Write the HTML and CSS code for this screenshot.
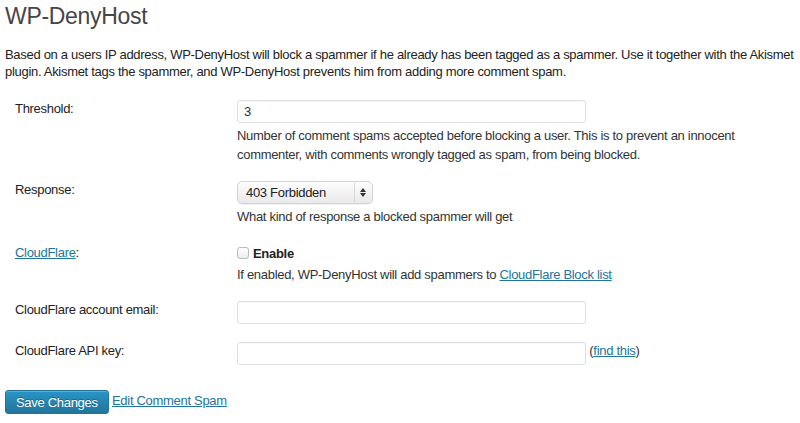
FILE: index.html
```html
<!DOCTYPE html>
<html>
<head>
<meta charset="utf-8">
<link rel="stylesheet" href="styles.css">
</head>
<body>
<div class="wrap">
  <h2 class="title">WP-DenyHost</h2>
  <p class="intro">Based on a users IP address, WP-DenyHost will block a spammer if he already has been tagged as a spammer. Use it together with the Akismet plugin. Akismet tags the spammer, and WP-DenyHost prevents him from adding more comment spam.</p>
  <form class="settings">
    <table class="form-table">
      <tr>
        <th>Threshold:</th>
        <td>
          <input class="text-field" type="text" value="3">
          <p class="description">Number of comment spams accepted before blocking a user. This is to prevent an innocent commenter, with comments wrongly tagged as spam, from being blocked.</p>
        </td>
      </tr>
      <tr>
        <th>Response:</th>
        <td>
          <span class="select-wrap"><select class="select"><option>403 Forbidden</option></select><span class="arrows"></span></span>
          <p class="description">What kind of response a blocked spammer will get</p>
        </td>
      </tr>
      <tr>
        <th class="th-check"><a href="#">CloudFlare</a>:</th>
        <td>
          <label class="check"><input type="checkbox" class="checkbox"><span>Enable</span></label>
          <p class="description">If enabled, WP-DenyHost will add spammers to <a href="#">CloudFlare Block list</a></p>
        </td>
      </tr>
      <tr>
        <th>CloudFlare account email:</th>
        <td><input class="text-field" type="text" value=""></td>
      </tr>
      <tr>
        <th>CloudFlare API key:</th>
        <td><input class="text-field" type="text" value=""> (<a href="#">find this</a>)</td>
      </tr>
    </table>
    <p class="submit"><button type="button" class="button-primary">Save Changes</button> <a href="#">Edit Comment Spam</a></p>
  </form>
</div>
</body>
</html>
```

FILE: styles.css
```css
html, body {
  margin: 0;
  padding: 0;
  background: #ffffff;
}
body {
  font-family: "Liberation Sans", Arial, sans-serif;
  font-size: 13px;
  letter-spacing: -0.3px;
  color: #333333;
}
a {
  color: #21759b;
  text-decoration: underline;
}
.wrap {
  padding: 0 5px;
}
.title {
  margin: 2px 0 0;
  font-size: 23px;
  font-weight: normal;
  line-height: 29px;
  color: #464646;
}
.intro {
  margin: 15px 0 0;
  width: 790px;
  line-height: 17px;
  color: #222222;
}
.settings {
  margin: 0;
}
.form-table {
  border-collapse: collapse;
  margin-top: 11px;
}
.form-table th {
  width: 202px;
  padding: 10px;
  text-align: left;
  vertical-align: top;
  font-weight: normal;
  line-height: 16px;
  color: #222222;
}
.form-table th.th-check {
  padding-top: 11px;
}
.form-table td {
  padding: 8px 10px;
  vertical-align: top;
  line-height: 19px;
}
.text-field {
  box-sizing: border-box;
  width: 349px;
  height: 23px;
  margin: 1px 0;
  padding: 2px 6px;
  border: 1px solid #dfdfdf;
  border-radius: 3px;
  background: #ffffff;
  font-family: "Liberation Sans", Arial, sans-serif;
  font-size: 13px;
  color: #333333;
  box-shadow: inset 0 1px 1px rgba(0,0,0,0.03);
  vertical-align: top;
}
.description {
  margin: 2px 0 0;
  line-height: 19px;
  color: #333333;
}
.select-wrap {
  position: relative;
  display: inline-block;
  margin: 1px 0;
  vertical-align: top;
}
.select {
  -webkit-appearance: none;
  appearance: none;
  box-sizing: border-box;
  width: 136px;
  height: 23px;
  padding: 0 0 0 8px;
  border: 1px solid #d4d4d4;
  border-radius: 5px;
  background: linear-gradient(#fdfdfd, #e9e9e9);
  font-family: "Liberation Sans", Arial, sans-serif;
  font-size: 13px;
  letter-spacing: -0.3px;
  color: #222222;
  display: block;
  box-shadow: 0 1px 1px rgba(0,0,0,0.06);
}
.select-wrap::before {
  content: "";
  position: absolute;
  top: 2px;
  bottom: 2px;
  right: 18px;
  width: 1px;
  background: #d6d6d6;
}
.arrows {
  position: absolute;
  top: 7px;
  right: 7px;
  width: 6px;
  height: 9px;
  pointer-events: none;
}
.arrows::before,
.arrows::after {
  content: "";
  position: absolute;
  left: 0;
  width: 0;
  height: 0;
  border-left: 3px solid transparent;
  border-right: 3px solid transparent;
}
.arrows::before {
  top: 0;
  border-bottom: 4px solid #333;
}
.arrows::after {
  bottom: 0;
  border-top: 4px solid #333;
}
.check {
  display: flex;
  align-items: center;
  height: 20px;
  margin-top: 1px;
  font-weight: bold;
  color: #222;
}
.checkbox {
  -webkit-appearance: none;
  appearance: none;
  box-sizing: border-box;
  width: 12px;
  height: 12px;
  margin: 0 4px 0 0;
  border: 1px solid #bbbbbb;
  border-radius: 3px;
  background: linear-gradient(#ffffff, #ededed);
}
.submit {
  margin: 16px 0 0;
  padding: 0;
}
.button-primary {
  box-sizing: border-box;
  height: 24px;
  padding: 0 10px;
  border: 1px solid #21759b;
  border-radius: 3px;
  background: linear-gradient(#2a95c5, #21759b);
  color: #ffffff;
  font-family: "Liberation Sans", Arial, sans-serif;
  font-size: 13px;
  letter-spacing: -0.3px;
  text-shadow: 0 -1px 0 rgba(0,0,0,0.3);
  box-shadow: inset 0 1px 0 rgba(120,200,230,0.5);
  vertical-align: middle;
}
```
